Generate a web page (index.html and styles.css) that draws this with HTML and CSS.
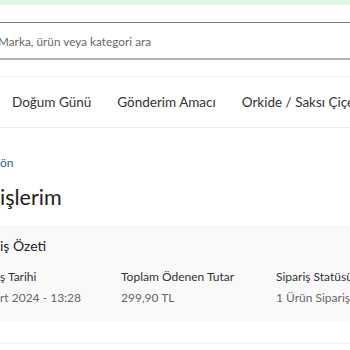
FILE: index.html
```html
<!DOCTYPE html>
<html lang="tr">
<head>
<meta charset="utf-8">
<link rel="stylesheet" href="styles.css">
</head>
<body>
<div class="topbar"></div>
<div class="search"><span class="placeholder">Marka, ürün veya kategori ara</span></div>
<nav class="nav">
  <span class="nav-item">Doğum Günü</span>
  <span class="sep"></span>
  <span class="nav-item">Gönderim Amacı</span>
  <span class="sep"></span>
  <span class="nav-item">Orkide / Saksı Çiçeği</span>
</nav>
<div class="back">ön</div>
<h1 class="title">işlerim</h1>
<section class="panel">
  <h2 class="panel-title">iş Özeti</h2>
  <div class="grid">
    <div class="label">ş Tarihi</div>
    <div class="label">Toplam Ödenen Tutar</div>
    <div class="label">Sipariş Statüsü</div>
    <div class="value">rt 2024 - 13:28</div>
    <div class="value">299,90 TL</div>
    <div class="value">1 Ürün Siparişi</div>
  </div>
</section>
<div class="after"></div>
</body>
</html>
```
FILE: styles.css
```css
html, body {
  margin: 0;
  padding: 0;
  background: #fff;
  overflow: hidden;
  width: 350px;
  height: 350px;
}
body {
  font-family: Lato, "Noto Sans", sans-serif;
  color: #333;
  white-space: nowrap;
}
.topbar {
  height: 5px;
  background: #e0f6e7;
}
.search {
  margin-top: 17px;
  height: 35px;
  border-top: 1px solid #7b7b7b;
  border-bottom: 2px solid #b3b3b3;
  display: flex;
  align-items: center;
}
.placeholder {
  margin-left: -2px;
  font-size: 11.7px;
  letter-spacing: 0.05px;
  color: #666;
}
.nav {
  margin-top: 16px;
  height: 50px;
  border-top: 1px solid #f0f0f0;
  border-bottom: 1px solid #ececec;
  display: flex;
  align-items: center;
  padding-left: 12px;
  gap: 13px;
}
.nav-item {
  font-size: 13.5px;
  color: #333;
}
.sep {
  width: 1px;
  height: 30px;
  background: #e6e6e6;
}
.back {
  margin-top: 27px;
  font-size: 12px;
  color: #2b5f92;
  line-height: 16px;
}
.title {
  margin: 12px 0 0;
  font-size: 21.5px;
  font-weight: 400;
  color: #222;
  line-height: 28px;
}
.panel {
  margin-top: 14px;
  background: #f9f9f9;
  height: 97px;
  padding-top: 11px;
  box-sizing: border-box;
}
.panel-title {
  margin: 0;
  font-size: 14px;
  font-weight: 400;
  color: #222;
  line-height: 20px;
}
.grid {
  margin-top: 13px;
  display: grid;
  grid-template-columns: 121px 155px 1fr;
  row-gap: 5px;
  font-size: 12px;
  line-height: 16px;
}
.label {
  color: #333;
}
.value {
  color: #666;
}
.after {
  margin-top: 21px;
  border-top: 1px solid #f0f0f0;
}
```
